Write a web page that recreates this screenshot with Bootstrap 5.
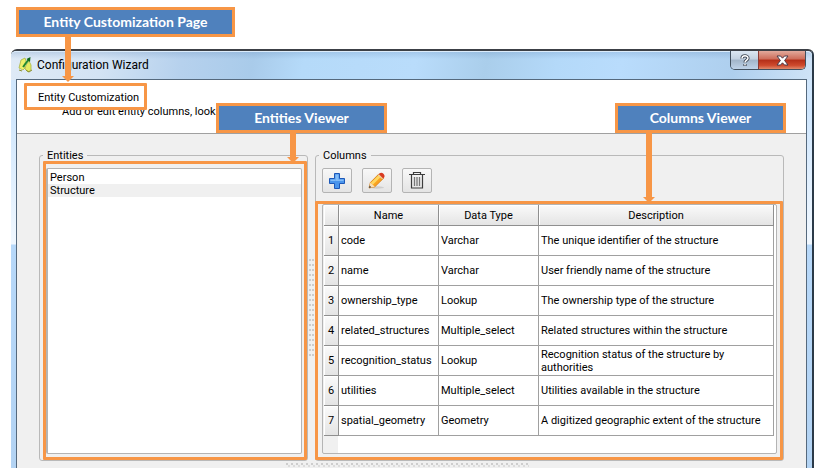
<!DOCTYPE html>
<html lang="en">
<head>
<meta charset="utf-8">
<meta name="viewport" content="width=device-width, initial-scale=1">
<title>Configuration Wizard</title>
<link href="https://cdn.jsdelivr.net/npm/bootstrap@5.3.0/dist/css/bootstrap.min.css" rel="stylesheet">
<style>
:root { --note: #f79646; --note-fill: #4f81bd; --frame: #b9b9b9; --face: #f0f0f0; }
body { background: #fff; color: #000; font: 11px/13px Roboto, "Liberation Sans", sans-serif; }
.callout { border: 3px solid var(--note); background: var(--note-fill); color: #fff; font: bold 14px/24px Lato, sans-serif; text-align: center; height: 30px; white-space: nowrap; z-index: 6; }
.callout-page { width: 219px; margin: 7px 0 12px 16px; position: relative; }
.callout-side { width: 171px; position: absolute; }
.callout-entities { left: 199px; top: 23px; }
.callout-columns { right: 20px; top: 23px; }
.arrow { position: absolute; width: 12px; display: flex; flex-direction: column; align-items: center; z-index: 5; }
.arrow::before { content: ""; width: 6px; flex: 1; background: var(--note); }
.arrow::after { content: ""; border: solid transparent; border-width: 6px 6px 0; border-top-color: var(--note); }
.arrow-page { left: 43px; top: 26px; height: 46px; }
.arrow-entities { left: 68px; top: 24px; height: 33px; }
.arrow-columns { left: 25px; top: 26px; height: 71px; }
.outline { position: absolute; border: 3px solid var(--note); border-radius: 1px; pointer-events: none; z-index: 4; }

.win { margin: 0 3px 0 11px; padding: 0 5px 0 5px; border-top: 2px solid #3c4046; border-right: 2px solid #2b3a48; border-radius: 6px 6px 0 0; background: linear-gradient(#d4e8fb 0, #cfe6fd 60px, #f1f8ff 193px, #b7d8f9 194px, #b3d3f3 100%); position: relative; }
.win::before { content: ""; position: absolute; inset: 0 0 auto 0; height: 29px; border-top: 1px solid #dcecfb; border-radius: 5px 5px 0 0; background: linear-gradient(rgba(90,130,180,.22), transparent 7px), linear-gradient(100deg, #dfeaf6 0, #d3e3f4 90px, #b6d1ed 170px, #a9cbea 240px, #b5daf9 290px, #b9dcfb 400px, #aaceeb 470px, #b4d9f9 540px, #b9dcfc 76%, #aecfee 90%, #cfe3f7 100%); }
.titlebar { height: 28px; position: relative; }
.titlebar h1 { font-size: 12px; line-height: 16px; font-weight: 400; }
.titlebar > svg { margin-left: 2px; }
.sysbtns { border: 1px solid #42505e; border-top: 0; border-radius: 0 0 5px 5px; height: 19px; overflow: hidden; margin-right: 1px; }
.sysbtns button { border: 0; padding: 0; display: flex; align-items: center; justify-content: center; }
.sys-help { width: 28px; background: linear-gradient(#dce7f2 0, #c3d1e0 45%, #a2b5c9 50%, #bfd3e8 100%); border-right: 1px solid #8d3b34 !important; }
.sys-close { width: 46px; background: linear-gradient(#e2aa9c 0, #cd6c59 45%, #b42e18 50%, #cf4a2d 80%, #e08a6c 100%); }
.client { border: 1px solid #55697d; border-bottom: 0; background: var(--face); position: relative; }
.pagehead { background: #fff; height: 54px; border-bottom: 1px solid #a0a0a0; position: relative; padding: 11px 0 0 21px; }
.pagehead h2 { font-size: 11px; line-height: 13px; font-weight: 400; margin: 0 0 1px; }
.pagehead p { margin: 0 0 0 24px; }
.outline-head { left: 7px; top: 3px; width: 123px; height: 27px; }

.panes { padding: 21px 22px 7px 22px; }
.group { position: relative; border: 1px solid var(--frame); border-radius: 3px; padding: 12px 6px 6px; min-width: 0; }
.group > h3 { position: absolute; top: -7px; left: 3px; padding: 0 4px; margin: 0; background: var(--face); font-size: 11px; line-height: 13px; font-weight: 400; z-index: 3; }
.group-entities { width: 269px; flex: none; padding-right: 5px; }
.outline-entities { inset: 5px 0 0 3px; }
.outline-columns { inset: 45px 0 0 -1px; }
.listing { border: 1px solid #b4b4b4; border-left-width: 2px; border-radius: 2px; background: #fff; height: 100%; padding-top: 2px; }
.listing .list-group-item { border: 0; padding: 0 2px; color: #000; line-height: 13px; background: none; border-radius: 0; }
.listing .list-group-item.picked { background: var(--face); }
.split-v { width: 7px; flex: none; display: flex; align-items: center; justify-content: center; }
.split-v::before { content: ""; width: 5px; height: 99px; background: conic-gradient(from 270deg at 2px 2px, #cdcdcd 90deg, transparent 0) 0 0/3px 5px; }
.split-h { height: 5px; width: 243px; margin: -5px auto 0 269px; background: conic-gradient(from 270deg at 2px 2px, #cdcdcd 90deg, transparent 0) 0 0/5px 5px, conic-gradient(from 270deg at 2px 2px, #dcdcdc 90deg, transparent 0) 2px 2px/5px 5px; }
.tools { gap: 10px; }
.tool { width: 30px; height: 25px; padding: 0; display: flex; align-items: center; justify-content: center; border: 1px solid #b4b4b4; border-radius: 2px; background: linear-gradient(#f8f8f8, #e4e4e4); }
.gridbox { border: 1px solid #b4b4b4; border-radius: 2px; background: linear-gradient(90deg, var(--face) 15px, #fff 15px); margin-top: 11px; padding: 0 2px 17px 1px; }
.fields { width: 100%; table-layout: fixed; border-collapse: separate; border-spacing: 0; }
.fields th { font-weight: 400; text-align: center; padding: 0; background: linear-gradient(#fafafa, #e4e4e4); border: solid #8f8f8f; border-width: 0 1px 1px 0; box-shadow: inset 1px 1px #fff; }
.fields thead th { height: 21px; }
.fields tbody th, .fields td { height: 30px; }
.fields td { padding: 0 2px; border: solid #a0a0a0; border-width: 0 1px 1px 0; vertical-align: middle; }
.c-num { width: 15px; } .c-mid { width: 100px; }
</style>
<script src="https://cdn.jsdelivr.net/npm/bootstrap@5.3.0/dist/js/bootstrap.bundle.min.js"></script>
</head>
<body class="d-flex flex-column min-vh-100 overflow-hidden">
<div class="callout callout-page">Entity Customization Page<span class="arrow arrow-page"></span></div>
<main class="win flex-grow-1 d-flex flex-column">
  <header class="titlebar d-flex align-items-center">
    <svg width="15" height="16" viewBox="0 0 15 16" aria-hidden="true"><path d="M3 3l4-2 1 3-2 4 1 3-2 2-4-2 1-4z" fill="#eef06a" stroke="#a9b545" stroke-width=".8"/><path d="M8 8l3-4 2 4v5l-3 2-3-3z" fill="#e6ea60" stroke="#a9b545" stroke-width=".8"/><path d="M5 10L11 2" stroke="#1f8a2b" stroke-width="1.800"/><path d="M8.500 2l4-2-.5 5z" fill="#12661c"/><path d="M1 13l3 1M8 13l3 2 3-2" stroke="#8b8f30" fill="none"/></svg>
    <h1 class="mb-0 ms-1">Configuration Wizard</h1>
    <div class="sysbtns d-flex ms-auto align-self-start">
      <button type="button" class="sys-help" aria-label="Help"><svg width="10" height="13" viewBox="0 0 10 13"><path d="M2 4.5C2 1 8 1 8 4.300C8 6.200 5 6.200 5 8.500M5 10v2" fill="none" stroke="#3c4450" stroke-width="3.200"/><path d="M2 4.500C2 1 8 1 8 4.300C8 6.200 5 6.200 5 8.500M5 10v1.600" fill="none" stroke="#fff" stroke-width="1.500"/></svg></button>
      <button type="button" class="sys-close" aria-label="Close"><svg width="13" height="11" viewBox="0 0 13 11"><path d="M1 1h3.500l2 2.200L8.500 1H12L8.600 5.500 12 10H8.500l-2-2.200L4.500 10H1l3.400-4.500z" fill="#fff" stroke="#4a3a48"/></svg></button>
    </div>
  </header>
  <section class="client flex-grow-1">
    <div class="pagehead">
      <h2>Entity Customization</h2>
      <p>Add or edit entity columns, looku</p>
      <span class="outline outline-head"></span>
    </div>
    <div class="callout callout-side callout-entities">Entities Viewer<span class="arrow arrow-entities"></span></div>
    <div class="callout callout-side callout-columns">Columns Viewer<span class="arrow arrow-columns"></span></div>
    <div class="panes d-flex">
      <section class="group group-entities">
        <h3>Entities</h3>
        <ul class="list-group listing">
          <li class="list-group-item">Person</li>
          <li class="list-group-item picked">Structure</li>
        </ul>
        <span class="outline outline-entities"></span>
      </section>
      <div class="split-v"></div>
      <section class="group flex-grow-1">
        <h3>Columns</h3>
        <div class="d-flex tools">
          <button type="button" class="tool" aria-label="Add column"><svg width="16" height="16" viewBox="0 0 16 16"><path d="M5.500.500h5v5h5v5h-5v5h-5v-5h-5v-5h5z" fill="#4a95ec" stroke="#1d58b8"/><path d="M6.500 8V1.500h3V6.500h5V8z" fill="#83bdf7"/><path d="M1.500 6.500h5V8h-5z" fill="#83bdf7"/></svg></button>
          <button type="button" class="tool" aria-label="Edit column"><svg width="18" height="17" viewBox="0 0 18 17"><ellipse cx="9" cy="15.500" rx="7" ry="1.200" fill="#bbb" opacity=".6"/><path d="M1 16l1.400-5.500L11 1.800l4.600 4.400-8.800 8.600z" fill="#f9a320" stroke="#d5780f" stroke-width=".8"/><path d="M2.800 10.800L11.200 2.500l2 1.900-8.400 8.300z" fill="#ffd760"/><path d="M1 16l1.400-5.500 4.400 4.300z" fill="#f7dfb8"/><path d="M1 16l.6-2.400 1.700 1.700z" fill="#333"/><path d="M11.800 1.200c2-2 6.200 1.800 4.300 4.200l-1 1-4.300-4.200z" fill="#d83a22"/><path d="M10.300 2.700l4.300 4.200" stroke="#e8c9a8" stroke-width="1.200"/></svg></button>
          <button type="button" class="tool" aria-label="Delete column"><svg width="16" height="17" viewBox="0 0 16 17" fill="none" stroke="#3c3c3c"><path d="M0 2.500h16M4.500 2V.500h7V2M2.500 3v13h11V3" stroke-width="1.200"/><path d="M5.500 5v9M8 5v9M10.500 5v9" stroke="#777" stroke-width="1.300"/></svg></button>
        </div>
        <div class="gridbox">
          <table class="fields">
            <colgroup><col class="c-num"><col class="c-mid"><col class="c-mid"><col></colgroup>
            <thead><tr><th></th><th scope="col">Name</th><th scope="col">Data Type</th><th scope="col">Description</th></tr></thead>
            <tbody>
              <tr><th scope="row">1</th><td>code</td><td>Varchar</td><td>The unique identifier of the structure</td></tr>
              <tr><th scope="row">2</th><td>name</td><td>Varchar</td><td>User friendly name of the structure</td></tr>
              <tr><th scope="row">3</th><td>ownership_type</td><td>Lookup</td><td>The ownership type of the structure</td></tr>
              <tr><th scope="row">4</th><td>related_structures</td><td>Multiple_select</td><td>Related structures within the structure</td></tr>
              <tr><th scope="row">5</th><td>recognition_status</td><td>Lookup</td><td>Recognition status of the structure by authorities</td></tr>
              <tr><th scope="row">6</th><td>utilities</td><td>Multiple_select</td><td>Utilities available in the structure</td></tr>
              <tr><th scope="row">7</th><td>spatial_geometry</td><td>Geometry</td><td>A digitized geographic extent of the structure</td></tr>
            </tbody>
          </table>
        </div>
        <span class="outline outline-columns"></span>
      </section>
    </div>
    <div class="split-h"></div>
  </section>
</main>
</body>
</html>
